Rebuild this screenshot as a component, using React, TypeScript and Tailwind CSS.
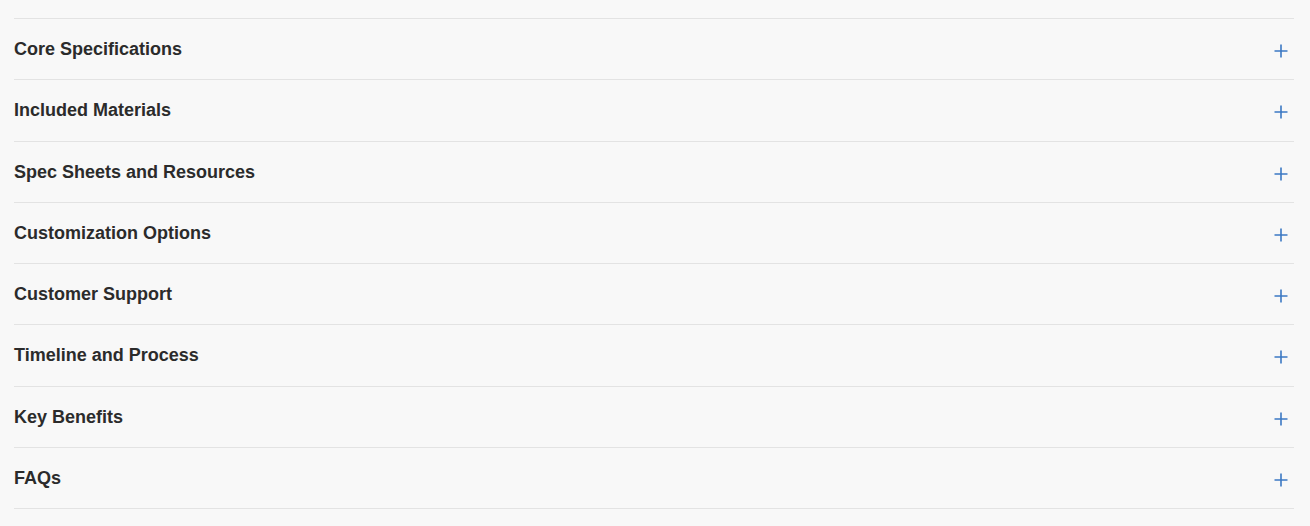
const sections = [
  "Core Specifications",
  "Included Materials",
  "Spec Sheets and Resources",
  "Customization Options",
  "Customer Support",
  "Timeline and Process",
  "Key Benefits",
  "FAQs",
];

function PlusIcon() {
  return (
    <svg width="14" height="14" viewBox="0 0 14 14" className="text-[#3b78c3]">
      <path d="M7 0.5V13.5M0.5 7H13.5" stroke="currentColor" strokeWidth="1.6" fill="none" />
    </svg>
  );
}

export default function App() {
  return (
    <div className="min-h-[526px] bg-[#f8f8f8] pt-[18px]" style={{ fontFamily: '"Liberation Sans", Arial, sans-serif' }}>
      <div className="mx-[14px] w-[1280px] border-t border-[#e3e3e3]">
        {sections.map((title) => (
          <div
            key={title}
            className="flex h-[61.25px] items-center justify-between border-b border-[#e3e3e3] cursor-pointer"
          >
            <span className="text-[18px] leading-none font-bold text-[#2b2b2b]">{title}</span>
            <span className="mr-[6px] mt-[4px] flex">
              <PlusIcon />
            </span>
          </div>
        ))}
      </div>
    </div>
  );
}
